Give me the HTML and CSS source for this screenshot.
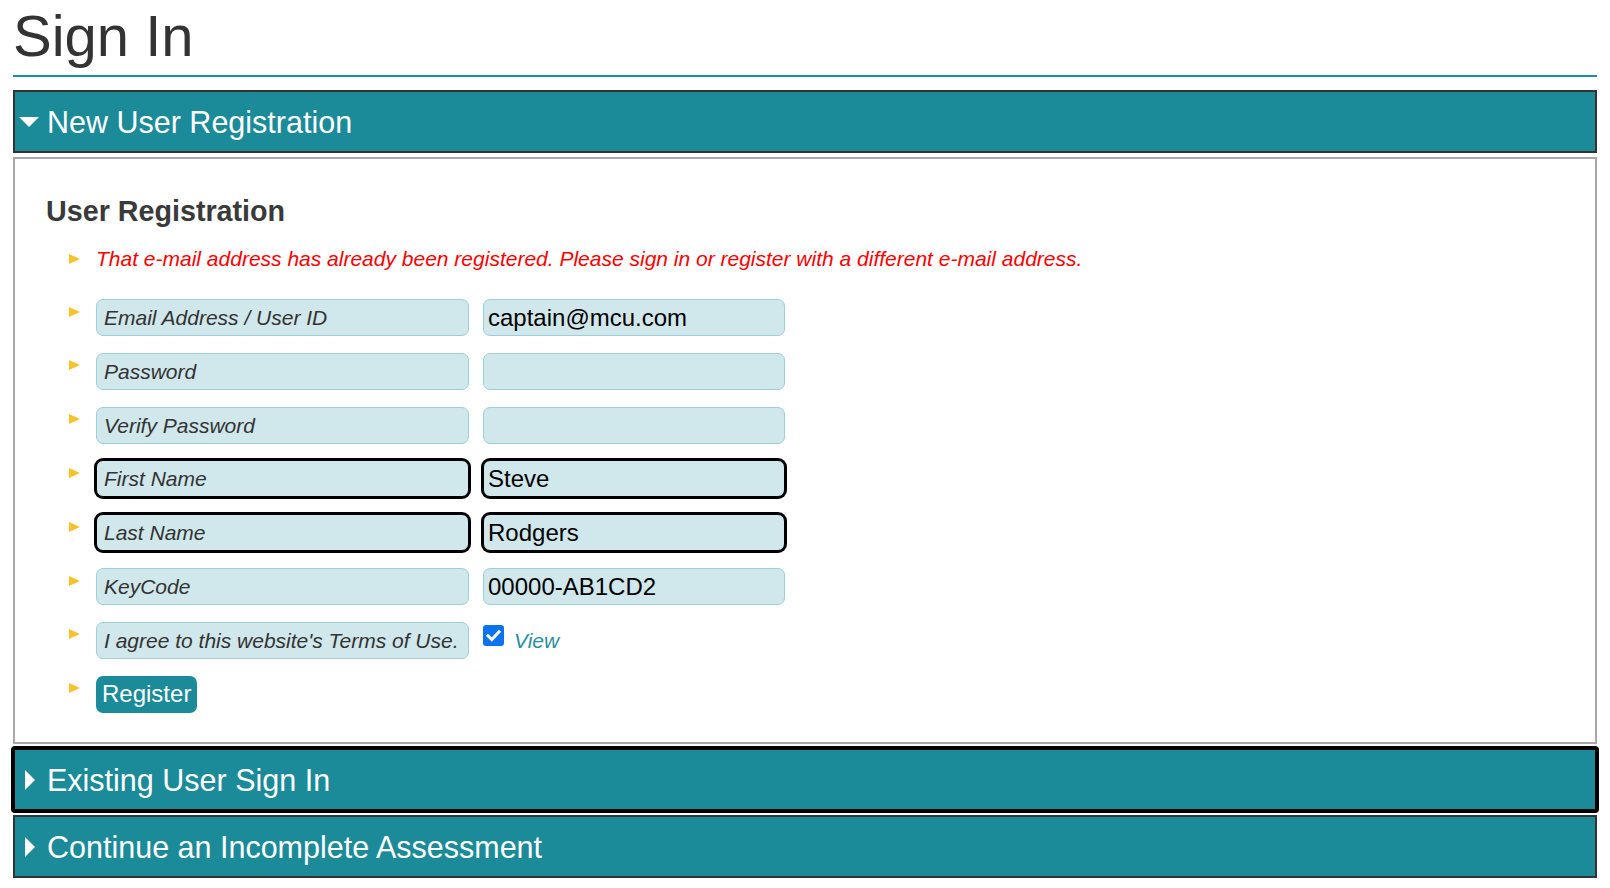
FILE: index.html
```html
<!DOCTYPE html>
<html lang="en">
<head>
<meta charset="utf-8">
<title>Sign In</title>
<link rel="stylesheet" href="styles.css">
</head>
<body>
<div class="page">
  <h1 class="title">Sign In</h1>

  <section class="acc">
    <div class="acc-head"><span class="caret"><span class="tri-down"></span></span><span class="acc-text">New User Registration</span></div>
    <div class="acc-body">
      <h2 class="sub">User Registration</h2>
      <ul class="form">
        <li class="item item-error"><span class="bullet"></span><span class="msg">That e-mail address has already been registered. Please sign in or register with a different e-mail address.</span></li>
        <li class="item"><span class="bullet"></span><div class="field"><label class="label">Email Address / User ID</label><input class="value" type="text" value="captain@mcu.com" readonly></div></li>
        <li class="item"><span class="bullet"></span><div class="field"><label class="label">Password</label><input class="value" type="password" value="" readonly></div></li>
        <li class="item"><span class="bullet"></span><div class="field"><label class="label">Verify Password</label><input class="value" type="password" value="" readonly></div></li>
        <li class="item"><span class="bullet"></span><div class="field"><label class="label focus">First Name</label><input class="value focus" type="text" value="Steve" readonly></div></li>
        <li class="item"><span class="bullet"></span><div class="field"><label class="label focus">Last Name</label><input class="value focus" type="text" value="Rodgers" readonly></div></li>
        <li class="item"><span class="bullet"></span><div class="field"><label class="label">KeyCode</label><input class="value" type="text" value="00000-AB1CD2" readonly></div></li>
        <li class="item"><span class="bullet"></span><div class="field"><label class="label">I agree to this website's Terms of Use.</label><div class="terms"><span class="check"><svg viewBox="0 0 21 21" width="21" height="21"><path d="M5 10.8 L8.8 14.6 L16 6.8" fill="none" stroke="#fff" stroke-width="3" stroke-linecap="square"/></svg></span><a class="view">View</a></div></div></li>
        <li class="item"><span class="bullet"></span><button class="btn" type="button">Register</button></li>
      </ul>
    </div>
  </section>

  <section class="acc">
    <div class="acc-head focused"><span class="caret"><span class="tri-right"></span></span><span class="acc-text">Existing User Sign In</span></div>
  </section>

  <section class="acc">
    <div class="acc-head"><span class="caret"><span class="tri-right"></span></span><span class="acc-text">Continue an Incomplete Assessment</span></div>
  </section>
</div>
</body>
</html>
```

FILE: styles.css
```css
* { box-sizing: border-box; }

html, body {
  margin: 0;
  padding: 0;
  background: #fff;
}

body {
  font-family: "Liberation Sans", Arial, sans-serif;
  color: #333;
}

.page {
  padding: 6px 13px 0;
}

.title {
  margin: 0 0 13px;
  padding: 0 0 9px;
  font-size: 58px;
  line-height: 60px;
  font-weight: normal;
  color: #333;
  border-bottom: 2px solid #1b8fa0;
}

.acc + .acc { margin-top: 4px; }

.acc-head {
  display: flex;
  align-items: center;
  height: 63px;
  padding: 1px 0 0 4px;
  background: #1b8a99;
  border: 2px solid #333;
  color: #fff;
  font-size: 30.5px;
}

.acc-head.focused {
  border-color: #000;
  box-shadow: 0 0 0 2px #000;
  border-radius: 2px;
}

.caret {
  display: flex;
  align-items: center;
  justify-content: center;
  width: 20px;
  height: 20px;
  margin-right: 8px;
}

.tri-down {
  width: 0;
  height: 0;
  border-left: 10px solid transparent;
  border-right: 10px solid transparent;
  border-top: 10px solid #fff;
}

.tri-right {
  width: 0;
  height: 0;
  margin-left: 2px;
  border-top: 10px solid transparent;
  border-bottom: 10px solid transparent;
  border-left: 10px solid #fff;
}

.acc-body {
  margin-top: 4px;
  border: 2px solid #a8a8a8;
  padding: 36px 31px 29.5px;
}

.sub {
  margin: 0 0 19.5px;
  font-size: 28.7px;
  line-height: 32px;
  font-weight: bold;
  color: #3a3a3a;
}

.form {
  list-style: none;
  margin: 0;
  padding: 0 0 0 23px;
  display: flex;
  flex-direction: column;
  gap: 16.8px;
}

.item {
  display: flex;
  align-items: flex-start;
}

.item-error { margin-bottom: 11.8px; }

.bullet {
  flex: none;
  width: 0;
  height: 0;
  margin: 7.5px 16px 0 0;
  border-top: 5.5px solid transparent;
  border-bottom: 5.5px solid transparent;
  border-left: 11px solid #f9c22a;
}

.msg {
  font-size: 21px;
  line-height: 24px;
  font-style: italic;
  color: #f00;
}

.field {
  display: flex;
  gap: 14px;
}

.label {
  display: block;
  width: 373px;
  height: 37px;
  padding: 0 7px;
  line-height: 35px;
  font-size: 21px;
  font-style: italic;
  color: #333;
  background: #d0e7eb;
  border: 1px solid #9fcfd9;
  border-radius: 7px;
}

.value {
  display: block;
  width: 302px;
  height: 37px;
  margin: 0;
  padding: 0 4px;
  font-family: "Liberation Sans", Arial, sans-serif;
  font-size: 24px;
  line-height: 35px;
  color: #000;
  background: #d0e7eb;
  border: 1px solid #9fcfd9;
  border-radius: 7px;
  outline: none;
}

.label.focus,
.value.focus {
  border-color: #000;
  box-shadow: 0 0 0 2px #000;
}

.terms {
  display: flex;
  align-items: flex-start;
  height: 37px;
}

.check {
  display: block;
  width: 21px;
  height: 21px;
  margin-top: 3px;
  background: #0b73f0;
  border-radius: 3px;
}

.check svg { display: block; }

.view {
  margin-left: 10px;
  font-size: 21px;
  line-height: 37px;
  font-style: italic;
  color: #2a8ea2;
  cursor: pointer;
}

.btn {
  height: 37px;
  margin: 0;
  padding: 0 6px;
  font-family: "Liberation Sans", Arial, sans-serif;
  font-size: 24px;
  color: #fff;
  background: #1b8a99;
  border: none;
  border-radius: 7px;
}
```
